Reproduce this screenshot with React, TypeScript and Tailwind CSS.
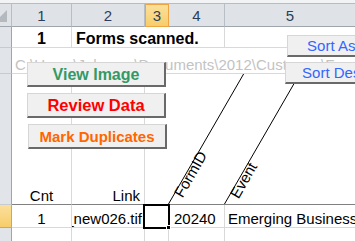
import React from 'react';

const hdr = 'flex items-center justify-center bg-[#dfe3e8] border-r border-b border-r-[#b8bec6] border-b-[#9ea5ad] text-[#2a3f5a]';
const rowHdr = 'bg-[#e1e4e8] border-r border-b border-r-[#9ea5ad] border-b-[#c6cbd1]';
const cell = 'flex items-end border-r border-b border-[#d9d9d9] overflow-hidden whitespace-nowrap';
const btn =
  'absolute flex items-center justify-center whitespace-nowrap bg-[#f0f0f0] border-t border-l border-t-[#d6d6d6] border-l-[#d6d6d6] border-r-2 border-b-2 border-r-[#696969] border-b-[#696969]';

export default function App() {
  return (
    <div className="relative w-[355px] h-[241px] overflow-hidden bg-white font-['Liberation_Sans',Arial,sans-serif] text-[15px] leading-[17px] text-black">
      <div className="h-[4px] bg-[#f1f3f5] border-b border-[#b5bcc4]" />
      <div className="grid grid-cols-[12px_60px_73px_24px_56px_1fr] grid-rows-[23px_21px_26px_131px_23px_14px]">
        {/* column headers */}
        <div className={hdr + ' relative overflow-hidden'}>
          <svg className="absolute left-0 top-0" width="12" height="23" viewBox="0 0 12 23">
            <polygon points="7,6 7,18 -5,18" fill="#b4b9bf" />
          </svg>
        </div>
        <div className={hdr}>1</div>
        <div className={hdr}>2</div>
        <div className="flex items-center justify-center bg-gradient-to-b from-[#fbe09a] to-[#f7cd6a] border border-[#eda543] text-[#2a3f5a]">3</div>
        <div className={hdr}>4</div>
        <div className={hdr + ' border-r-0'}>5</div>

        {/* row 1 */}
        <div className={rowHdr} />
        <div className={cell + ' justify-center font-bold text-[16px]'}>1</div>
        <div className={cell + ' col-span-3 pl-[4px] font-bold text-[16px] overflow-visible'}>Forms scanned.</div>
        <div className={cell + ' border-r-0'} />

        {/* row 2 */}
        <div className={rowHdr} />
        <div className={cell + ' col-span-5 border-r-0 pl-[3px] text-[#c3c3c3]'}>
          C:\Users\Johnson\Documents\2012\Customer\Forms\Scan
        </div>

        {/* header row with rotated labels */}
        <div className={rowHdr + ' border-b-[#808080]'} />
        <div className={cell + ' justify-center border-b-[#808080]'}>Cnt</div>
        <div className={cell + ' justify-end pr-[4px] border-b-[#808080]'}>Link</div>
        <div className={cell + ' col-span-3 border-r-0 border-b-[#808080]'} />

        {/* data row */}
        <div className="bg-gradient-to-b from-[#fbe09a] to-[#f7cd6a] border-r border-b border-[#e5a13f]" />
        <div className={cell + ' justify-center'}>1</div>
        <div className={cell + ' justify-end pr-[2px]'}>Forms_new026.tif</div>
        <div className={cell} />
        <div className={cell + ' pl-[5px]'}>20240</div>
        <div className={cell + ' border-r-0 pl-[3px]'}>Emerging Business Expo</div>

        {/* next row */}
        <div className={rowHdr} />
        <div className={cell} />
        <div className={cell} />
        <div className={cell} />
        <div className={cell} />
        <div className={cell + ' border-r-0'} />
      </div>

      {/* slanted borders of the rotated headers */}
      <svg className="absolute left-0 top-0 pointer-events-none" width="355" height="241" viewBox="0 0 355 241">
        <line x1="168.5" y1="204" x2="243.6" y2="74" stroke="#000" strokeWidth="1" />
        <line x1="224.5" y1="204" x2="299.6" y2="74" stroke="#000" strokeWidth="1" />
      </svg>
      <span className="absolute left-[185px] top-[183px] origin-bottom-left rotate-[-60deg] whitespace-nowrap">FormID</span>
      <span className="absolute left-[241px] top-[184px] origin-bottom-left rotate-[-60deg] whitespace-nowrap">Event</span>

      {/* active cell */}
      <div className="absolute left-[143px] top-[204px] w-[27px] h-[25px] border-2 border-black" />
      <div className="absolute left-[166px] top-[225px] w-[5px] h-[5px] bg-black border border-white" />

      {/* buttons */}
      <div className={btn + ' left-[27px] top-[62px] w-[139px] h-[25px] font-bold text-[16px] text-[#339966]'}>View Image</div>
      <div className={btn + ' left-[27px] top-[93px] w-[139px] h-[25px] font-bold text-[16.5px] text-[#ff0000]'}>Review Data</div>
      <div className={btn + ' left-[28px] top-[124px] w-[139px] h-[25px] font-bold text-[#ff6600]'}>Mark Duplicates</div>
      <div className={btn + ' left-[287px] top-[35px] w-[142px] h-[22px] text-[#3366ff]'}>Sort Ascending</div>
      <div className={btn + ' left-[285px] top-[62px] w-[146px] h-[22px] text-[#3366ff]'}>Sort Descending</div>
    </div>
  );
}
